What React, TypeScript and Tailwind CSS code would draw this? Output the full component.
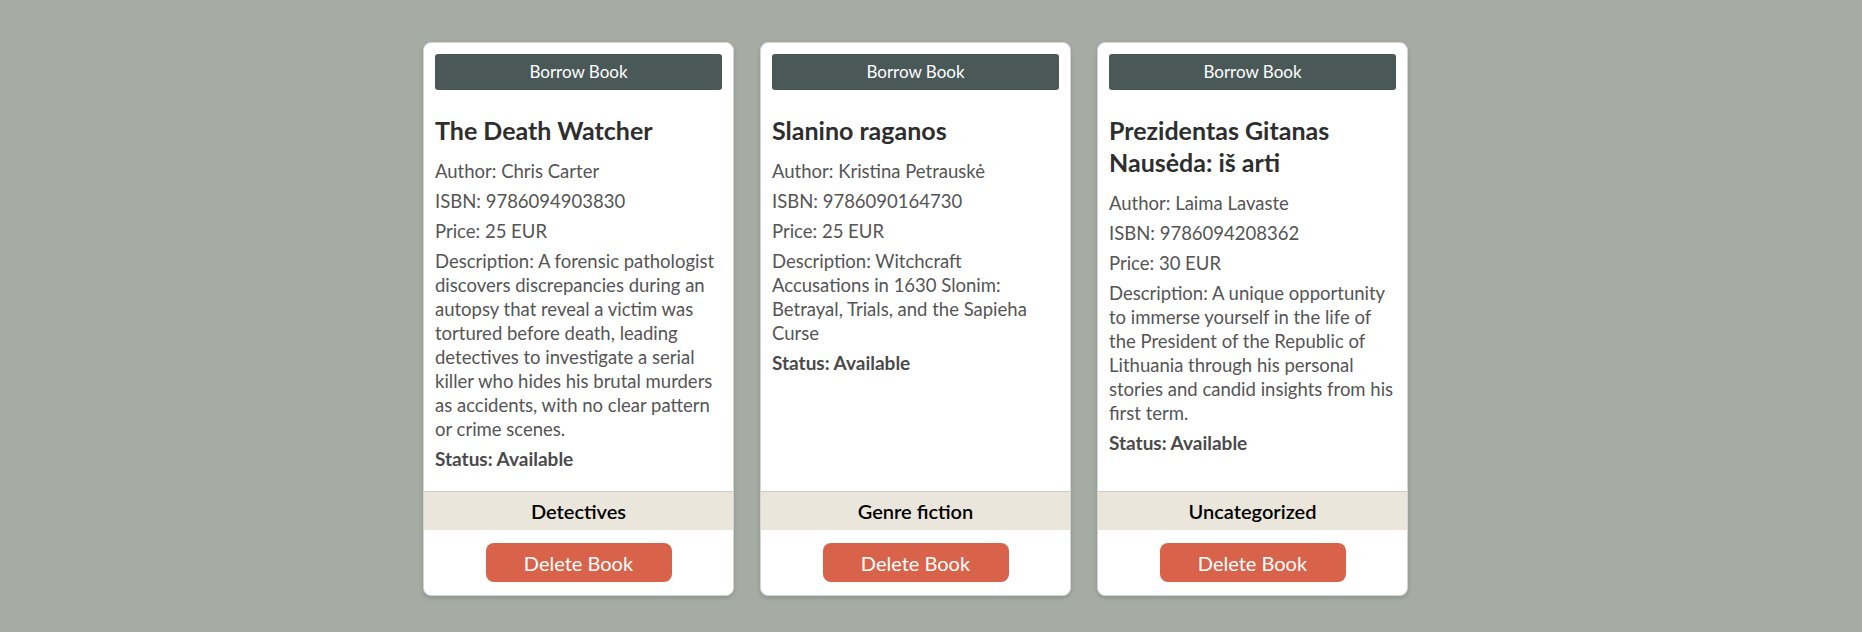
const books = [
  {
    title: 'The Death Watcher',
    author: 'Chris Carter',
    isbn: '9786094903830',
    price: 25,
    description:
      'A forensic pathologist discovers discrepancies during an autopsy that reveal a victim was tortured before death, leading detectives to investigate a serial killer who hides his brutal murders as accidents, with no clear pattern or crime scenes.',
    status: 'Available',
    category: 'Detectives',
  },
  {
    title: 'Slanino raganos',
    author: 'Kristina Petrauskė',
    isbn: '9786090164730',
    price: 25,
    description: 'Witchcraft Accusations in 1630 Slonim: Betrayal, Trials, and the Sapieha Curse',
    status: 'Available',
    category: 'Genre fiction',
  },
  {
    title: 'Prezidentas Gitanas Nausėda: iš arti',
    author: 'Laima Lavaste',
    isbn: '9786094208362',
    price: 30,
    description:
      'A unique opportunity to immerse yourself in the life of the President of the Republic of Lithuania through his personal stories and candid insights from his first term.',
    status: 'Available',
    category: 'Uncategorized',
  },
];

export default function App() {
  return (
    <div
      className="min-h-[632px] bg-[#a6aba4] flex justify-center items-stretch gap-[26px] pt-[42px] pb-[36px] pr-[31px]"
      style={{ fontFamily: 'Lato, "Open Sans", sans-serif' }}
    >
      {books.map((book) => (
        <div
          key={book.isbn}
          className="w-[311px] bg-white rounded-lg border border-[#d4d6d3] shadow-[0_2px_4px_rgba(0,0,0,0.15)] flex flex-col overflow-hidden"
        >
          <div className="px-[11px] pt-[11px] pb-[20px]">
            <button className="w-full h-9 bg-[#4a5858] text-white text-[17px] rounded-[3px]">
              Borrow Book
            </button>
            <h2 className="mt-[24px] mb-[13px] text-[25px] leading-[32px] font-bold text-[#2e2e2e]">
              {book.title}
            </h2>
            <div className="text-[18.5px] leading-6 text-[#555555] flex flex-col gap-[6px]">
              <p>Author: {book.author}</p>
              <p>ISBN: {book.isbn}</p>
              <p>Price: {book.price} EUR</p>
              <p>Description: {book.description}</p>
              <p className="font-bold text-[19px] text-[#4a4a4a]">Status: {book.status}</p>
            </div>
          </div>
          <div className="mt-auto border-t border-[#cccccc] bg-[#ebe6dc] h-[39px] flex items-center justify-center text-[20px] font-semibold text-black">
            {book.category}
          </div>
          <div className="flex justify-center py-[13px]">
            <button className="w-[186px] h-[39px] bg-[#d9634a] text-white text-[20px] rounded-lg">
              Delete Book
            </button>
          </div>
        </div>
      ))}
    </div>
  );
}
